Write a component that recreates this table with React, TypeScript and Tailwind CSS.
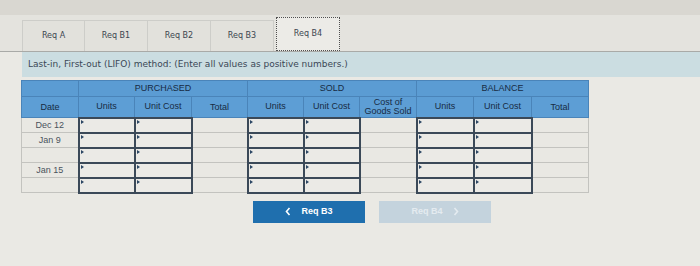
import React from "react";

const TABS = ["Req A", "Req B1", "Req B2", "Req B3", "Req B4"];
const ACTIVE_TAB = "Req B4";

const COL_WIDTHS = [57, 56, 57, 56, 56, 56, 57, 57, 58, 57];

// which body columns take input (the rest are computed / labels)
const INPUT_COLS = new Set([1, 2, 4, 5, 7, 8]);

const ROWS = ["Dec 12", "Jan 9", "", "Jan 15", ""];

function InputCell() {
  return (
    <td className="h-[15px] border-2 border-[#3b4958] bg-[#ebeae6] p-0 align-top">
      <div className="flex h-full items-start">
        <span className="mt-[1px] ml-[1px] h-0 w-0 border-t-[2px] border-b-[2px] border-l-[3px] border-t-transparent border-b-transparent border-l-[#2a4563]" />
      </div>
    </td>
  );
}

function PlainCell({ children }: { children?: React.ReactNode }) {
  return (
    <td className="h-[15px] border border-[#c3c3bf] bg-[#e9e8e3] p-0 text-center text-[9px] leading-none text-[#4a535c]">
      {children}
    </td>
  );
}

function Chevron({ dir }: { dir: "left" | "right" }) {
  return (
    <svg width="6" height="9" viewBox="0 0 6 9" fill="none">
      <path
        d={dir === "left" ? "M4.5 1 L1.5 4.5 L4.5 8" : "M1.5 1 L4.5 4.5 L1.5 8"}
        stroke="currentColor"
        strokeWidth="1.6"
      />
    </svg>
  );
}

export default function App() {
  return (
    <div className="relative h-[266px] w-[700px] overflow-hidden bg-[#eae9e4] font-['Liberation_Sans',Arial,sans-serif]">
      <div className="h-[15px] bg-[#d9d7d1]" />

      {/* requirement tabs */}
      <div className="flex h-[37px] items-end border-b border-[#a9aaa7] bg-[#e4e3de] pl-[22px] font-['DejaVu_Sans',sans-serif] text-[8px] text-[#3c4650]">
        {TABS.map((t) =>
          t === ACTIVE_TAB ? (
            <div
              key={t}
              className="ml-[2px] flex h-[34px] w-[64px] items-center justify-center border border-dotted border-[#4f4f4f] bg-[#ecebe7]"
            >
              {t}
            </div>
          ) : (
            <div
              key={t}
              className="flex h-[31px] w-[63px] items-center justify-center border-r border-t border-[#cdcdc9] bg-[#e2e1dc] first:border-l"
            >
              {t}
            </div>
          ),
        )}
      </div>

      <div className="ml-[22px] flex h-[25px] items-center bg-[#cbdde1] pl-[6px] font-['DejaVu_Sans',sans-serif] text-[9px] text-[#3a4755]">
        Last-in, First-out (LIFO) method: (Enter all values as positive numbers.)
      </div>

      <table className="mt-[3px] ml-[21px] table-fixed border-collapse">
        <colgroup>
          {COL_WIDTHS.map((w, i) => (
            <col key={i} style={{ width: w }} />
          ))}
        </colgroup>
        <thead className="text-[9px] leading-none text-[#172b43]">
          <tr className="h-[16px] bg-[#5b9cd3]">
            <th className="border border-[#4a84b9] font-normal" />
            <th colSpan={3} className="border border-[#4a84b9] font-normal">PURCHASED</th>
            <th colSpan={3} className="border border-[#4a84b9] font-normal">SOLD</th>
            <th colSpan={3} className="border border-[#4a84b9] font-normal">BALANCE</th>
          </tr>
          <tr className="h-[21px] bg-[#5d9ed5]">
            {["Date", "Units", "Unit Cost", "Total", "Units", "Unit Cost"].map((h, i) => (
              <th key={i} className="border border-[#4a84b9] font-normal">
                {h}
              </th>
            ))}
            <th className="border border-[#4a84b9] font-normal">
              Cost of
              <br />
              Goods Sold
            </th>
            {["Units", "Unit Cost", "Total"].map((h, i) => (
              <th key={i} className="border border-[#4a84b9] font-normal">
                {h}
              </th>
            ))}
          </tr>
        </thead>
        <tbody>
          {ROWS.map((d, r) => (
            <tr key={r}>
              {COL_WIDTHS.map((_, c) =>
                c === 0 ? (
                  <PlainCell key={c}>{d}</PlainCell>
                ) : INPUT_COLS.has(c) ? (
                  <InputCell key={c} />
                ) : (
                  <PlainCell key={c} />
                ),
              )}
            </tr>
          ))}
        </tbody>
      </table>

      <div className="mt-[7px] flex gap-[14px] pl-[253px]">
        <button
          type="button"
          className="flex h-[22px] w-[112px] items-center justify-center gap-[10px] bg-[#1f6fae] text-[9px] font-bold text-white"
        >
          <Chevron dir="left" />
          <span>Req B3</span>
        </button>
        <button
          type="button"
          disabled
          className="flex h-[22px] w-[112px] items-center justify-center gap-[10px] bg-[#c4d3dd] text-[9px] font-bold text-[#e4ebf0]"
        >
          <span>Req B4</span>
          <Chevron dir="right" />
        </button>
      </div>
    </div>
  );
}
